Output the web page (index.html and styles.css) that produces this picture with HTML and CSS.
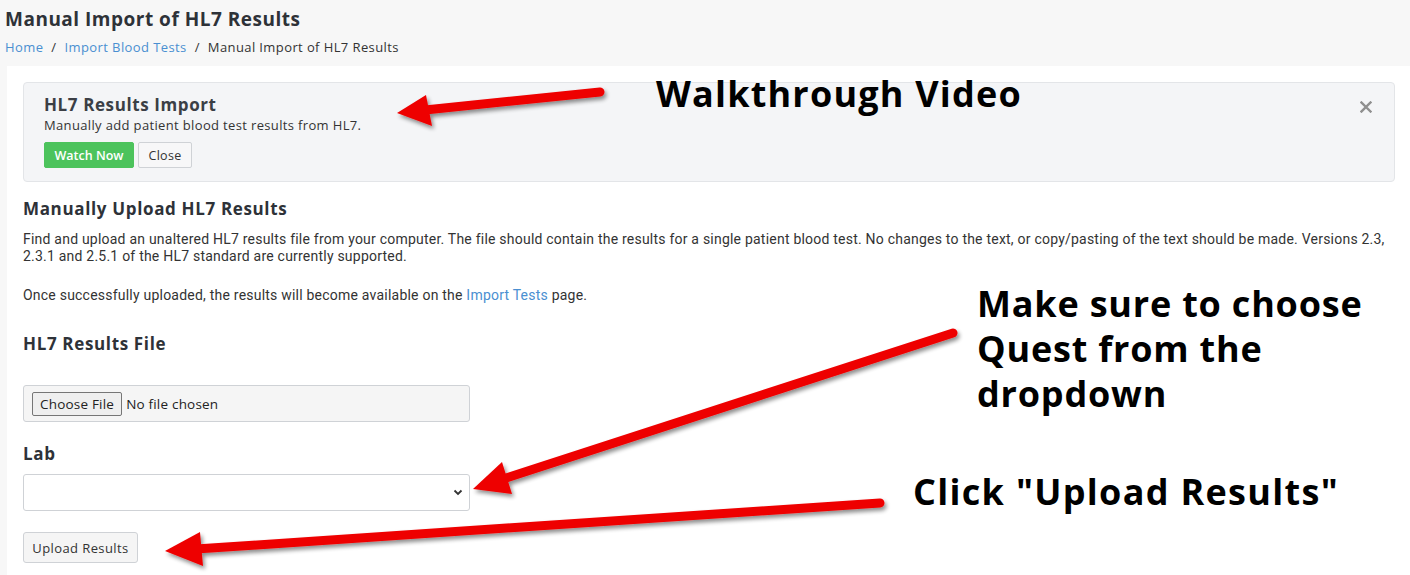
FILE: index.html
```html
<!DOCTYPE html>
<html lang="en">
<head>
<meta charset="utf-8">
<title>Manual Import of HL7 Results</title>
<link rel="stylesheet" href="styles.css">
</head>
<body>
<header class="page-head">
  <h1 class="page-title">Manual Import of HL7 Results</h1>
  <nav class="crumbs">
    <a href="#">Home</a><span class="sep">/</span><a href="#">Import Blood Tests</a><span class="sep">/</span><span>Manual Import of HL7 Results</span>
  </nav>
</header>

<main class="card">
  <section class="notice">
    <div class="notice-body">
      <h2 class="notice-title">HL7 Results Import</h2>
      <p class="notice-text">Manually add patient blood test results from HL7.</p>
      <div class="notice-actions">
        <button class="btn btn-green">Watch Now</button>
        <button class="btn btn-light">Close</button>
      </div>
    </div>
    <button class="notice-x" aria-label="Close">
      <svg width="12" height="12" viewBox="0 0 12 12"><path d="M1.5 1.5L10.5 10.5M10.5 1.5L1.5 10.5" stroke="#8f8f8f" stroke-width="2.4" stroke-linecap="square"/></svg>
    </button>
  </section>

  <h2 class="section-title">Manually Upload HL7 Results</h2>
  <p class="copy">Find and upload an unaltered HL7 results file from your computer. The file should contain the results for a single patient blood test. No changes to the text, or copy/pasting of the text should be made. Versions 2.3, 2.3.1 and 2.5.1 of the HL7 standard are currently supported.</p>
  <p class="copy copy-2">Once successfully uploaded, the results will become available on the <a href="#">Import Tests</a> page.</p>

  <form class="upload-form">
    <label class="field-label label-file">HL7 Results File</label>
    <div class="file-box">
      <span class="file-btn">Choose File</span>
      <span class="file-name">No file chosen</span>
    </div>
    <label class="field-label label-lab">Lab</label>
    <div class="select-box">
      <svg class="chev" width="10" height="7" viewBox="0 0 10 7"><path d="M1.5 1.5L5 5L8.5 1.5" fill="none" stroke="#333" stroke-width="1.8"/></svg>
    </div>
    <div class="submit-row">
      <button type="button" class="btn btn-upload">Upload Results</button>
    </div>
  </form>
</main>

<div class="note note-video">Walkthrough Video</div>
<div class="note note-quest">Make sure to choose<br>Quest from the<br>dropdown</div>
<div class="note note-upload">Click "Upload Results"</div>

<svg class="arrows" width="1410" height="575" viewBox="0 0 1410 575">
  <defs>
    <filter id="sh" x="-10%" y="-50%" width="120%" height="200%">
      <feGaussianBlur in="SourceAlpha" stdDeviation="2"/>
      <feOffset dx="2" dy="3" result="b"/>
      <feComponentTransfer><feFuncA type="linear" slope="0.45"/></feComponentTransfer>
      <feMerge><feMergeNode/><feMergeNode in="SourceGraphic"/></feMerge>
    </filter>
  </defs>
  <g filter="url(#sh)" fill="#ee0000" stroke="#ee0000" stroke-linecap="round">
    <line x1="600" y1="92" x2="425" y2="110" stroke-width="9"/>
    <polygon points="397,113 432,126 426,95" stroke="none"/>

    <line x1="953" y1="333" x2="503" y2="479" stroke-width="9"/>
    <polygon points="473,489 512,494 502,462" stroke="none"/>

    <line x1="880" y1="503" x2="196" y2="549" stroke-width="9"/>
    <polygon points="165,551 203,566 200,532" stroke="none"/>
  </g>
</svg>
</body>
</html>
```

FILE: styles.css
```css
* { box-sizing: border-box; }

html, body {
  margin: 0;
  padding: 0;
}

body {
  background: #f7f7f7;
  font-family: "Open Sans", Lato, Arial, sans-serif;
  color: #333;
  width: 1410px;
  height: 575px;
  overflow: hidden;
  position: relative;
}

a { color: #4a8fd1; text-decoration: none; }

.page-head {
  padding: 7px 5px 0;
  height: 66px;
}

.page-title {
  margin: 0;
  font-size: 19px;
  font-weight: 700;
  color: #2e3238;
  line-height: 24px;
  letter-spacing: 0.5px;
}

.crumbs {
  margin-top: 8px;
  font-size: 13px;
  line-height: 16px;
  color: #333;
  letter-spacing: 0.4px;
}

.crumbs .sep {
  margin: 0 8px;
}

.card {
  margin-left: 7px;
  background: #fff;
  padding: 16px 15px 20px 16px;
  height: 509px;
}

.notice {
  display: flex;
  justify-content: space-between;
  background: #f4f5f7;
  border: 1px solid #e3e5e8;
  border-radius: 4px;
  padding: 12px 20px 12px 20px;
  height: 100px;
}

.notice-title {
  margin: 0;
  font-size: 17px;
  font-weight: 700;
  color: #3b3f45;
  line-height: 20px;
  letter-spacing: 0.6px;
}

.notice-text {
  margin: 2px 0 0;
  font-size: 13px;
  line-height: 16px;
  color: #333;
  letter-spacing: 0.35px;
}

.notice-actions {
  display: flex;
  gap: 4px;
  margin-top: 9px;
}

.btn {
  font-family: "Open Sans", Lato, Arial, sans-serif;
  font-size: 12.5px;
  border-radius: 2px;
  cursor: pointer;
}

.btn-green {
  background: #4cc35c;
  border: 1px solid #4cc35c;
  color: #fff;
  font-weight: 600;
  width: 90px;
  height: 26px;
  padding: 0;
}

.btn-light {
  background: #f7f7f8;
  border: 1px solid #cfd2d6;
  color: #333;
  width: 54px;
  height: 26px;
  padding: 0;
  letter-spacing: 0.3px;
}

.notice-x {
  background: none;
  border: 0;
  padding: 0;
  margin-top: 6px;
  margin-right: 1px;
  width: 14px;
  height: 14px;
  align-self: flex-start;
}

.section-title {
  margin: 17px 0 0;
  font-size: 17px;
  font-weight: 700;
  color: #2e3238;
  line-height: 20px;
  letter-spacing: 0.65px;
}

.copy {
  margin: 12px 0 0;
  font-family: Roboto, Arial, sans-serif;
  font-size: 14px;
  line-height: 17px;
  color: #333;
  letter-spacing: 0.22px;
}

.copy-2 { margin-top: 22px; }

.upload-form {
  display: flex;
  flex-direction: column;
  width: 447px;
}

.field-label {
  font-size: 17px;
  font-weight: 700;
  color: #2e3238;
  line-height: 20px;
  letter-spacing: 0.65px;
}

.label-file { margin-top: 30px; }

.file-box {
  margin-top: 31px;
  height: 37px;
  display: flex;
  align-items: center;
  background: #f5f5f5;
  border: 1px solid #cfd2d6;
  border-radius: 3px;
  padding-left: 8px;
  font-family: "Open Sans", Arial, sans-serif;
  font-size: 13.5px;
  color: #222;
}

.file-btn {
  display: inline-block;
  padding: 2px 7px;
  border: 1px solid #767676;
  border-radius: 2px;
  background: #efefef;
  margin-right: 4px;
  line-height: 18px;
  letter-spacing: 0.2px;
}

.file-name { letter-spacing: 0.2px; }

.label-lab { margin-top: 22px; }

.select-box {
  margin-top: 10px;
  height: 37px;
  background: #fff;
  border: 1px solid #cfd2d6;
  border-radius: 3px;
  display: flex;
  align-items: center;
  justify-content: flex-end;
  padding-right: 6px;
}

.submit-row { margin-top: 21px; }

.btn-upload {
  background: #f5f5f5;
  border: 1px solid #cfd2d6;
  color: #333;
  font-size: 13px;
  letter-spacing: 0.4px;
  width: 115px;
  height: 31px;
  padding: 0;
  border-radius: 3px;
}

.note {
  position: absolute;
  font-family: "Open Sans", Lato, sans-serif;
  font-weight: 700;
  font-size: 36px;
  color: #000;
  line-height: 45px;
  white-space: nowrap;
  letter-spacing: 1.2px;
}

.note-video { left: 656px; top: 71px; }
.note-quest { left: 977px; top: 281px; letter-spacing: 0.8px; }
.note-upload { left: 913px; top: 469px; letter-spacing: 1.3px; }

.arrows {
  position: absolute;
  left: 0;
  top: 0;
  pointer-events: none;
}
```
